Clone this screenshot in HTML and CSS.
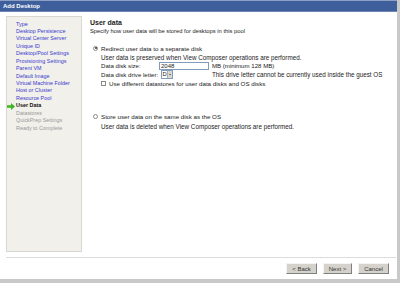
FILE: index.html
```html
<!DOCTYPE html>
<html lang="en">
<head>
    <meta charset="UTF-8">
    <title>Add Desktop</title>
    <link rel="stylesheet" href="styles.css">
</head>
<body>
    <div class="window">
        <div class="title-bar">Add Desktop</div>

        <div class="wizard-body">
            <!-- Steps -->
            <div class="steps">
                <div class="step done">Type</div>
                <div class="step done">Desktop Persistence</div>
                <div class="step done">Virtual Center Server</div>
                <div class="step done">Unique ID</div>
                <div class="step done">Desktop/Pool Settings</div>
                <div class="step done">Provisioning Settings</div>
                <div class="step done">Parent VM</div>
                <div class="step done">Default Image</div>
                <div class="step done">Virtual Machine Folder</div>
                <div class="step done">Host or Cluster</div>
                <div class="step done">Resource Pool</div>
                <div class="step current">
                    <svg class="step-arrow" width="8" height="7" viewBox="0 0 8 7">
                        <path d="M0 2.2h4V0l4 3.5L4 7V4.8H0z" fill="#3cb521"/>
                    </svg>
                    User Data
                </div>
                <div class="step todo">Datastores</div>
                <div class="step todo">QuickPrep Settings</div>
                <div class="step todo">Ready to Complete</div>
            </div>

            <!-- Page -->
            <div class="page">
                <div class="page-title">User data</div>
                <div class="page-desc">Specify how user data will be stored for desktops in this pool</div>

                <div class="option">
                    <label class="radio-row"><span class="radio checked"></span>Redirect user data to a separate disk</label>
                    <div class="option-body">
                        <div class="note">User data is preserved when View Composer operations are performed.</div>
                        <div class="field">
                            <span class="field-label">Data disk size:</span>
                            <span class="text-input">2048</span>
                            <span class="field-hint">MB (minimum 128 MB)</span>
                        </div>
                        <div class="field">
                            <span class="field-label">Data disk drive letter:</span>
                            <span class="select">D:<span class="select-btn"></span></span>
                            <span class="field-hint wide">This drive letter cannot be currently used inside the guest OS</span>
                        </div>
                        <label class="check-row"><span class="checkbox"></span>Use different datastores for user data disks and OS disks</label>
                    </div>
                </div>

                <div class="option second">
                    <label class="radio-row"><span class="radio"></span>Store user data on the same disk as the OS</label>
                    <div class="option-body">
                        <div class="note">User data is deleted when View Composer operations are performed.</div>
                    </div>
                </div>
            </div>
        </div>

        <div class="footer">
            <button class="btn">&lt; Back</button>
            <button class="btn next">Next &gt;</button>
            <button class="btn">Cancel</button>
        </div>
    </div>
</body>
</html>
```

FILE: styles.css
```css
* {
    margin: 0;
    padding: 0;
    box-sizing: border-box;
}

body {
    font-family: "Liberation Sans", Arial, sans-serif;
    background: #c9c9c9;
    width: 400px;
    height: 283px;
    overflow: hidden;
}

.window {
    width: 397px;
    height: 279px;
    background: #ffffff;
    display: flex;
    flex-direction: column;
}

.title-bar {
    height: 12px;
    background: #3e5f9c;
    border-top: 1px solid #8da0c4;
    border-bottom: 1px solid #6f86b4;
    color: #ffffff;
    font-size: 6px;
    font-weight: bold;
    line-height: 10px;
    padding-left: 3px;
}

.wizard-body {
    display: flex;
    padding: 4px 6px 0 6px;
    height: 240px;
}

.steps {
    width: 76px;
    height: 236px;
    background: #f1f0ea;
    border: 1px solid #d9d8d0;
    padding: 3.5px 0 0 9px;
    flex-shrink: 0;
}

.step {
    font-size: 5.4px;
    line-height: 7.45px;
    height: 7.45px;
    white-space: nowrap;
    position: relative;
}

.step.done {
    color: #3a3ad0;
}

.step.current {
    color: #111111;
    font-weight: bold;
}

.step.todo {
    color: #9a9a9a;
}

.step-arrow {
    position: absolute;
    left: -9px;
    top: 0.5px;
}

.page {
    padding: 3px 0 0 8px;
    color: #222222;
}

.page-title {
    font-size: 7px;
    font-weight: bold;
    line-height: 8px;
}

.page-desc {
    font-size: 5.8px;
    line-height: 8px;
}

.option {
    margin-top: 9px;
}

.option.second {
    margin-top: 25px;
}

.radio-row,
.check-row {
    display: flex;
    align-items: center;
    font-size: 6.2px;
    height: 8px;
    gap: 3px;
}

.radio-row {
    margin-left: 3px;
}

.radio {
    width: 5px;
    height: 5px;
    border: 1px solid #8a8a8a;
    border-radius: 50%;
    background: #ffffff;
    position: relative;
}

.radio.checked::after {
    content: "";
    position: absolute;
    left: 0.5px;
    top: 0.5px;
    width: 2px;
    height: 2px;
    border-radius: 50%;
    background: #333333;
}

.option-body {
    padding-left: 11px;
}

.note {
    font-size: 6.3px;
    line-height: 9px;
    margin-top: 0.5px;
}

.option.second .note {
    margin-top: 1.5px;
}

.field {
    display: flex;
    align-items: center;
    height: 8.5px;
    font-size: 6.1px;
}

.field-label {
    width: 58px;
}

.text-input {
    width: 50px;
    height: 8px;
    border: 1px solid #7f9db9;
    font-size: 6px;
    line-height: 6px;
    padding-left: 1px;
}

.text-input + .field-hint {
    margin-left: 3px;
}

.select {
    width: 12px;
    height: 8.5px;
    border: 1px solid #7f9db9;
    font-size: 5.8px;
    line-height: 6.5px;
    padding-left: 0.5px;
    margin-left: 2px;
    position: relative;
}

.select-btn {
    position: absolute;
    right: 0;
    top: 0;
    width: 5px;
    height: 6.5px;
    background: #d8d6cf;
    border-left: 1px solid #b0b0b0;
}

.select-btn::after {
    content: "";
    position: absolute;
    left: 0.5px;
    top: 2.5px;
    border-left: 1.5px solid transparent;
    border-right: 1.5px solid transparent;
    border-top: 1.5px solid #111111;
}

.field-hint.wide {
    margin-left: 39px;
    font-size: 6.3px;
}

.check-row {
    margin-top: 0.5px;
}

.checkbox {
    width: 5px;
    height: 5px;
    border: 1px solid #8a8a8a;
    background: #ffffff;
}

.footer {
    margin: 5px 1px 0 6px;
    border-top: 1px solid #dcdcdc;
    display: flex;
    justify-content: flex-end;
    gap: 6px;
    padding: 5px 7px 0 0;
}

.btn {
    font-family: "Liberation Sans", Arial, sans-serif;
    font-size: 6px;
    height: 11px;
    width: 31px;
    color: #333333;
    background: #d4d2cb;
    border: 1px solid;
    border-color: #f4f4f4 #808080 #808080 #f4f4f4;
}

.btn.next {
    width: 29px;
}
```
